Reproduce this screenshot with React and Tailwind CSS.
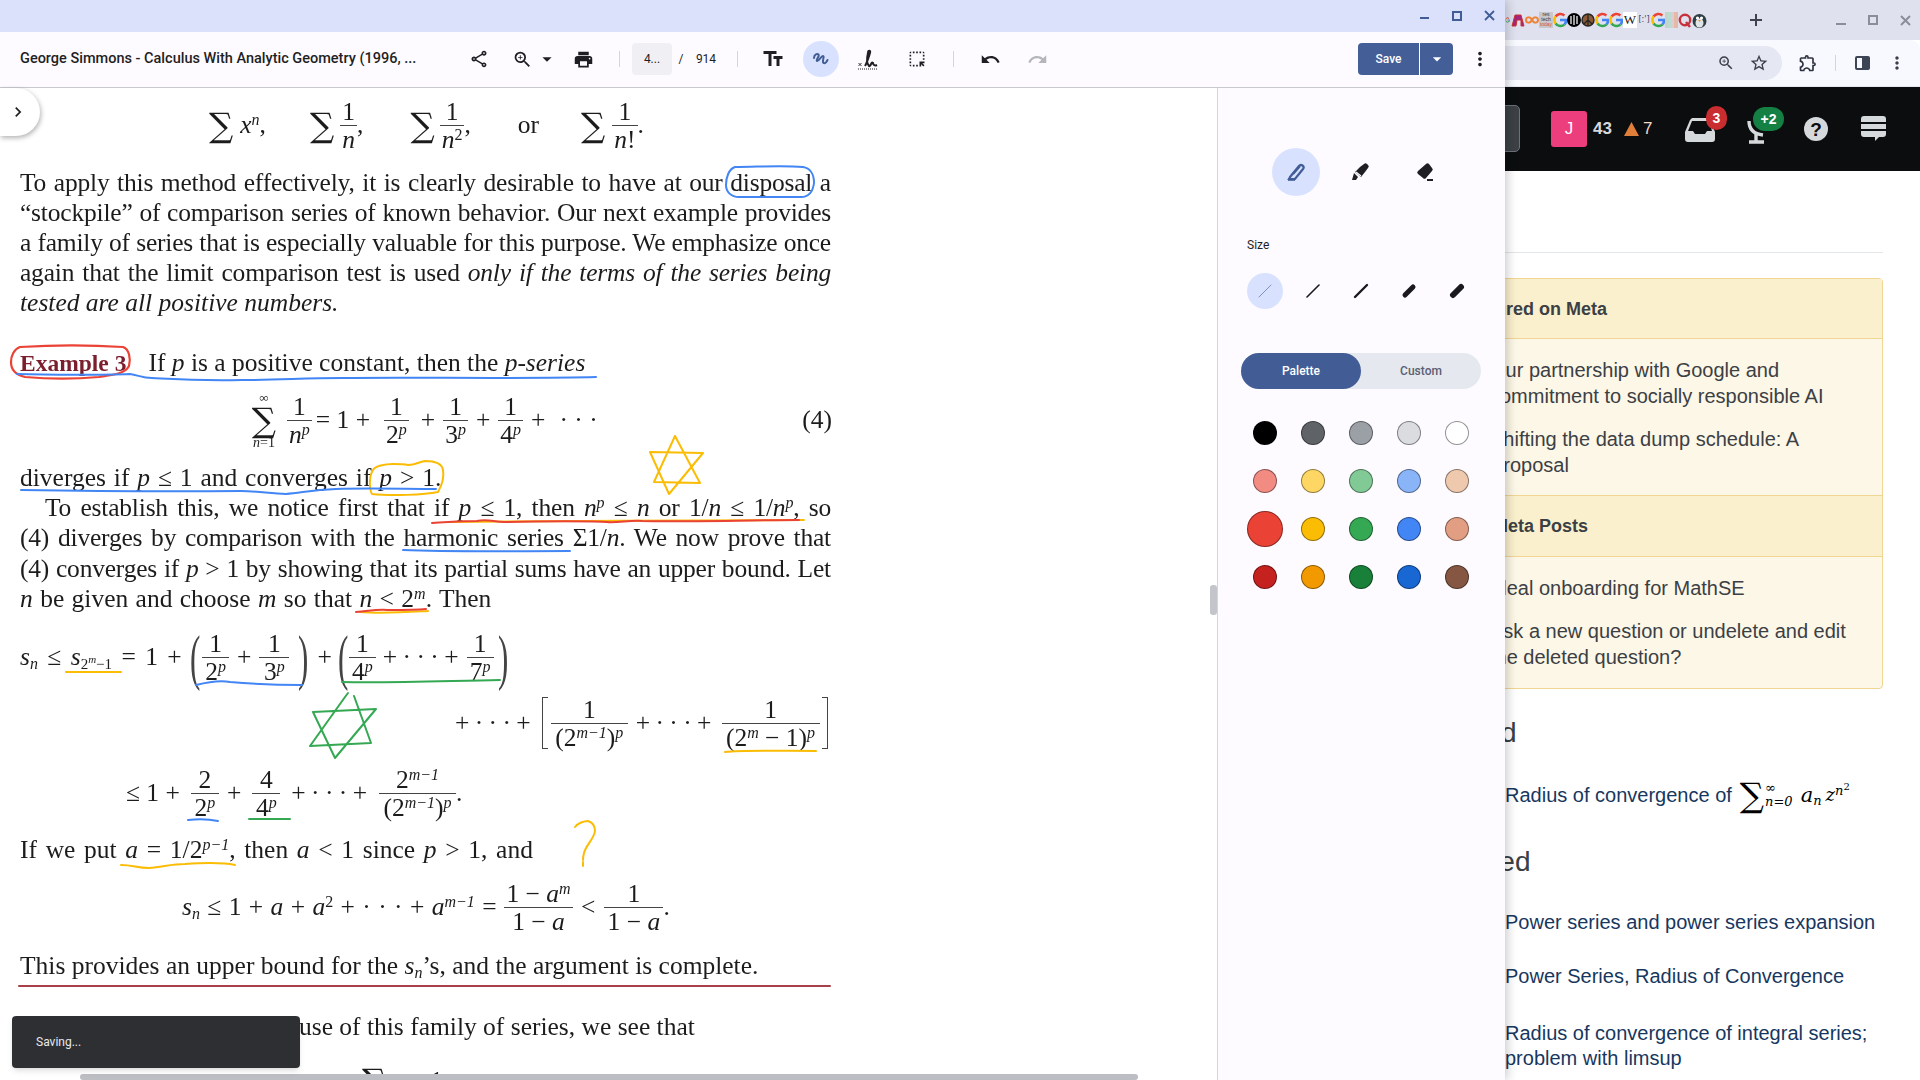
import React from "react";
import { MdOutlineShare, MdZoomIn, MdPrint, MdTextFields, MdUndo, MdRedo, MdMoreVert, MdHighlightAlt, MdArrowDropDown, MdChevronRight, MdStarBorder, MdOutlineExtension } from "react-icons/md";

const F = ({ n, d, cls = "" }) => (
  <span className={"inline-flex flex-col items-center leading-[27px] shrink-0 " + cls}>
    <span className="px-[2px]">{n}</span>
    <span className="h-px w-full bg-[#444]" />
    <span className="px-[2px]">{d}</span>
  </span>
);
const I = ({ children }) => <i className="italic">{children}</i>;
const Sigma = ({ cls = "" }) => <span className={"text-[34px] leading-[36px] font-['DejaVu_Serif',serif] font-light " + cls}>∑</span>;
const P = () => <sup className="italic text-[16px]">p</sup>;
const J = ({ children }) => <div className="h-[30px] leading-[30px] text-justify [text-align-last:justify] whitespace-nowrap tracking-[-0.2px]">{children}</div>;
const J2 = ({ children }) => <div className="h-[30.3px] leading-[30px] text-justify [text-align-last:justify] whitespace-nowrap tracking-[-0.2px]">{children}</div>;

function G() {
  return (
    <svg width="14" height="16" viewBox="0 0 14 16" fill="none" strokeWidth="2.6">
      <path d="M11.4 3.4A6 6 0 0 0 2.6 4.6" stroke="#ea4335" />
      <path d="M2.6 4.6a6 6 0 0 0 0 6.8" stroke="#fbbc04" />
      <path d="M2.6 11.4a6 6 0 0 0 9 1" stroke="#34a853" />
      <path d="M11.6 12.4A6 6 0 0 0 13 8H7" stroke="#4285f4" />
    </svg>
  );
}

function Favicons() {
  return (
    <div className="flex items-center h-4 w-[205px] overflow-hidden">
      <div className="w-[5px] overflow-hidden flex justify-end shrink-0"><G /></div>
      <svg className="ml-[1px] shrink-0" width="14" height="16" viewBox="0 0 14 16" fill="none"><path d="M1 14 4 3h6l3 11h-3V8H6L5 14z" fill="#a4247e" stroke="#c8352f" /></svg>
      <svg className="shrink-0" width="14" height="16" viewBox="0 0 14 16" fill="none" stroke="#ef8336" strokeWidth="2"><path d="M7 8C5 4 1 5 1 8s4 4 6 0 6-3 6 0-4 4-6 0" /></svg>
      <div className="shrink-0 w-[14px] h-4 bg-[#c8c8cc] text-[5px] leading-[5px] font-['Liberation_Sans',sans-serif] text-[#333] text-center overflow-hidden">res<br />tech<br /><span className="text-[#d7542a]">today</span></div>
      <G />
      <svg className="shrink-0" width="14" height="16" viewBox="0 0 14 16"><circle cx="7" cy="8" r="7" fill="#000" /><path d="M4 4v8M7 3v10M10 4v8" stroke="#ddd" strokeWidth="1.4" /></svg>
      <svg className="shrink-0" width="14" height="16" viewBox="0 0 14 16" fill="none"><circle cx="7" cy="8" r="6" fill="#8a5a36" stroke="#222" strokeWidth="1.4" /><path d="M7 2v12M7 8l-4 4M7 8l4 4" stroke="#222" strokeWidth="1.2" /></svg>
      <G />
      <G />
      <div className="shrink-0 w-[14px] h-4 bg-white text-[13px] leading-4 font-['Liberation_Serif',serif] text-[#222] text-center">W</div>
      <div className="shrink-0 w-[14px] h-4 text-[8px] leading-4 font-['DejaVu_Sans',sans-serif] text-[#445] text-center">{"[:']"}</div>
      <G />
      <div className="shrink-0 w-[13px] h-4 flex">
        <span className="w-[3px] bg-[#c6d3c6]" /><span className="w-[3px] bg-[#b9dcd0]" /><span className="w-[3px] bg-[#e3c9d0]" /><span className="w-[4px] bg-[#e3b9a8]" />
      </div>
      <svg className="shrink-0" width="14" height="16" viewBox="0 0 14 16" fill="none"><circle cx="7" cy="8" r="5.2" stroke="#c8323c" strokeWidth="2.4" /><path d="m8 10 4 5" stroke="#c8323c" strokeWidth="2.4" /></svg>
      <svg className="shrink-0" width="15" height="16" viewBox="0 0 15 16"><ellipse cx="7.5" cy="9" rx="7" ry="7" fill="#2f3d44" /><ellipse cx="7.5" cy="11" rx="4" ry="4.5" fill="#dfe4e6" /><circle cx="5.5" cy="6" r="1.6" fill="#fff" /><circle cx="9.5" cy="6" r="1.6" fill="#fff" /><path d="M6 8h3l-1.5 2z" fill="#e5953a" /></svg>
    </div>
  );
}

function Background() {
  return (
    <div className="w-[1920px] h-[1080px] bg-white flex flex-col font-['Liberation_Sans',Arial,sans-serif]">
      <div className="h-10 bg-[#dfe1ef] flex items-center pl-[1505px] shrink-0">
        <Favicons />
        <svg className="ml-[39px] shrink-0" width="14" height="14" viewBox="0 0 14 14" stroke="#3f4350" strokeWidth="2"><path d="M7 1v12M1 7h12" /></svg>
        <span className="ml-[73px] w-[10px] h-[2px] bg-[#8b8d99] mt-[8px] shrink-0" />
        <span className="ml-[22px] w-[10px] h-[10px] border-2 border-[#8b8d99] shrink-0" />
        <svg className="ml-[22px] shrink-0" width="11" height="11" viewBox="0 0 11 11" stroke="#8b8d99" strokeWidth="2"><path d="m1 1 9 9M10 1l-9 9" /></svg>
      </div>
      <div className="h-[47px] bg-[#f8f9ff] rounded-t-[10px] flex items-center shrink-0 border-b border-[#e6e8f0]">
        <div className="ml-[1200px] w-[582px] h-[34px] rounded-r-[17px] bg-[#e5e7f3] flex items-center justify-end pr-[13px] text-[#3c3f4a]">
          <MdZoomIn size={18} />
          <MdStarBorder size={20} className="ml-[14px]" />
        </div>
        <MdOutlineExtension size={20} className="ml-[16px] text-[#2f3340] shrink-0" />
        <span className="ml-[17px] w-[1px] h-[16px] bg-[#cdd6ee]" />
        <span className="ml-[19px] w-[15px] h-[14px] border-2 border-[#3d4454] rounded-[2px] flex justify-end"><span className="w-[6px] bg-[#3d4454]" /></span>
        <MdMoreVert size={20} className="ml-[17px] text-[#3c3f4a] shrink-0" />
      </div>
      <div className="h-[84px] bg-[#0c0d0e] flex items-center pl-[1400px] shrink-0 text-[#d6d9dc]">
        <div className="w-[120px] h-[47px] bg-[#3c4146] border border-[#6a737c] rounded-[5px] mt-[-1px]" />
        <div className="ml-[31px] w-9 h-9 rounded-[3px] bg-[#ec3d7c] text-white text-[17px] flex items-center justify-center">J</div>
        <span className="ml-[6px] text-[17px] font-bold w-[26px]">43</span>
        <svg className="ml-[5px]" width="15" height="14" viewBox="0 0 15 14"><path d="M7.5 0 15 14H0z" fill="#e07f3a" /></svg>
        <span className="ml-[4px] text-[17px] text-[#f0d9c6] w-[10px]">7</span>
        <div className="relative ml-[32px] w-[32px] h-[26px]">
          <svg width="30" height="24" viewBox="0 0 30 24" className="mt-[2px]"><path d="M7 0h17l6 14v7a3 3 0 0 1-3 3H3a3 3 0 0 1-3-3v-7L5 2zM7 3l-4 10h5l2 3h10l2-3h5L24 3z" fill="#d6d9dc" fillRule="evenodd" /></svg>
          <span className="absolute left-[21px] top-[-10px] w-[21px] h-[24px] rounded-full bg-[#c92d30] text-white text-[14px] font-bold flex items-center justify-center">3</span>
        </div>
        <div className="relative ml-[28px] w-[40px] h-[30px]">
          <svg width="24" height="26" viewBox="0 0 24 26" className="mt-[4px]" fill="none" stroke="#d6d9dc" strokeWidth="3.4"><path d="M4 3c0 8 5 13 14 14M11 16v7M4 24h15" /></svg>
          <span className="absolute left-[8px] top-[-7px] w-[31px] h-[24px] rounded-full bg-[#158043] text-white text-[14px] font-bold flex items-center justify-center">+2</span>
        </div>
        <div className="ml-[19px] w-6 h-6 rounded-full bg-[#d6d9dc] text-[#0c0d0e] text-[19px] font-bold flex items-center justify-center leading-none">?</div>
        <svg className="ml-[33px]" width="25" height="26" viewBox="0 0 25 26" fill="#d6d9dc"><path d="M3 0h19a3 3 0 0 1 3 3v3H0V3a3 3 0 0 1 3-3zM0 8h25v5H0zM0 15h25v3a3 3 0 0 1-3 3h-4l-4 4v-4H3a3 3 0 0 1-3-3z" /></svg>
      </div>
      <div className="pl-[1440px] pr-[37px] flex-1 min-h-0">
        <div className="h-px bg-[#e3e6e8] mt-[81px]" />
        <div className="mt-[25px] h-[411px] border border-[#f1d592] rounded-[4px] bg-[#fdf7e7] text-[#3b4045] text-[20px] leading-[26px] whitespace-nowrap">
          <div className="h-[60px] bg-[#fbf0cd] border-b border-[#f1d592] flex items-center pl-[17px] font-bold text-[18px]">Featured on Meta</div>
          <div className="pl-[49px] pt-[18px] h-[156px]">
            <div>Our partnership with Google and<br />commitment to socially responsible AI</div>
            <div className="mt-[17px]">Shifting the data dump schedule: A<br />Proposal</div>
          </div>
          <div className="h-[62px] bg-[#fbf0cd] border-y border-[#f1d592] flex items-center pl-[17px] font-bold text-[18px]">Hot Meta Posts</div>
          <div className="pl-[49px] pt-[18px]">
            <div>Ideal onboarding for MathSE</div>
            <div className="mt-[17px]">Ask a new question or undelete and edit<br />the deleted question?</div>
          </div>
        </div>
        <div className="ml-[-6px] mt-[25px] text-[#3b4045] text-[28px] leading-[38px]">Linked</div>
        <div className="pl-[65px] mt-[30px] h-[26px] text-[#17375e] text-[20px] leading-[26px] whitespace-nowrap flex items-center">
          Radius of convergence of
          <span className="ml-[8px] flex items-center text-black font-['DejaVu_Serif',serif]">
            <span className="text-[34px] leading-[30px]">∑</span>
            <span className="flex flex-col text-[13px] leading-[14px] ml-[1px] items-start italic"><span>∞</span><span>n=0</span></span>
            <span className="ml-[8px] italic text-[21px]">a<sub className="text-[13px]">n</sub></span>
            <span className="ml-[4px] italic text-[18px]">z<sup className="text-[13px]">n<sup className="text-[10px] not-italic">2</sup></sup></span>
          </span>
        </div>
        <div className="ml-[-6px] mt-[35px] text-[#3b4045] text-[28px] leading-[38px]">Related</div>
        <div className="pl-[65px] mt-[29px] text-[#17375e] text-[20px] leading-[25px] whitespace-nowrap">
          <div>Power series and power series expansion</div>
          <div className="mt-[29px]">Power Series, Radius of Convergence</div>
          <div className="mt-[32px]">Radius of convergence of integral series;<br />problem with limsup</div>
        </div>
      </div>
    </div>
  );
}

const BR = ({ c, cls = "" }) => <span className={"text-[62px] leading-[62px] font-light text-[#444] scale-x-50 w-[12px] text-center " + cls}>{c}</span>;
const Dots = ({ cls = "" }) => <span className={"[word-spacing:-1px] " + cls}>+ · · · +</span>;

function Doc() {
  return (
    <div className="w-full h-full bg-white font-['Liberation_Serif','Times_New_Roman',serif] text-[25.5px] text-[#1c1c1c] blur-[0.35px] overflow-hidden">
      <div className="h-[74px] flex items-center whitespace-nowrap">
        <Sigma cls="ml-[209px]" />
        <span className="ml-[7px]"><I>x<sup className="text-[16px]">n</sup></I>,</span>
        <Sigma cls="ml-[44px]" />
        <F n="1" d={<I>n</I>} cls="ml-[6px]" /><span className="self-center">,</span>
        <Sigma cls="ml-[47px]" />
        <F n="1" d={<><I>n</I><sup className="text-[16px]">2</sup></>} cls="ml-[5px]" /><span>,</span>
        <span className="ml-[47px]">or</span>
        <Sigma cls="ml-[42px]" />
        <F n="1" d={<><I>n</I>!</>} cls="ml-[7px]" /><span>.</span>
      </div>
      <div className="mt-[6px] px-5 w-[851px]">
        <J>To apply this method effectively, it is clearly desirable to have at our disposal a</J>
        <J>“stockpile” of comparison series of known behavior. Our next example provides</J>
        <J>a family of series that is especially valuable for this purpose. We emphasize once</J>
        <J>again that the limit comparison test is used <I>only if the terms of the series being</I></J>
        <div className="h-[30px] leading-[30px]"><I>tested are all positive numbers.</I></div>
      </div>
      <div className="mt-[30px] h-[30px] leading-[30px] pl-[20px] whitespace-nowrap">
        <span className="font-bold text-[#7b1f2e] text-[23.5px]">Example 3</span>
        <span className="ml-[22px]">If <I>p</I> is a positive constant, then the <I>p-series</I></span>
      </div>
      <div className="mt-[7px] h-[70px] flex items-center whitespace-nowrap w-[851px]">
        <span className="ml-[250px] w-[28px] flex flex-col items-center leading-none shrink-0">
          <span className="text-[13px] leading-[12px]">∞</span>
          <span className="h-[32px] flex items-center"><Sigma /></span>
          <span className="text-[14px] leading-[13px]"><I>n</I>=1</span>
        </span>
        <F n="1" d={<><I>n</I><P /></>} cls="ml-[9px]" />
        <span className="ml-[4px]">= 1 +</span>
        <F n="1" d={<>2<P /></>} cls="ml-[14px]" />
        <span className="ml-[12px]">+</span>
        <F n="1" d={<>3<P /></>} cls="ml-[8px]" />
        <span className="ml-[8px]">+</span>
        <F n="1" d={<>4<P /></>} cls="ml-[8px]" />
        <span className="ml-[8px]">+</span>
        <span className="ml-[14px]">· · ·</span>
        <span className="ml-auto mr-[19px]">(4)</span>
      </div>
      <div className="mt-[8px] h-[30px] leading-[30px] pl-[20px] whitespace-nowrap [word-spacing:1.5px]">diverges if <I>p</I> ≤ 1 and converges if <I>p</I> &gt; 1.</div>
      <div className="px-5 w-[851px]">
        <div className="pl-[25px]"><J2>To establish this, we notice first that if <I>p</I> ≤ 1, then <I>n<sup className="text-[16px]">p</sup></I> ≤ <I>n</I> or 1/<I>n</I> ≤ 1/<I>n<sup className="text-[16px]">p</sup></I>, so</J2></div>
        <J2>(4) diverges by comparison with the harmonic series Σ1/<I>n</I>. We now prove that</J2>
        <J2>(4) converges if <I>p</I> &gt; 1 by showing that its partial sums have an upper bound. Let</J2>
        <div className="h-[30.3px] leading-[30px] whitespace-nowrap [word-spacing:1px]"><I>n</I> be given and choose <I>m</I> so that <I>n</I> &lt; 2<sup className="italic text-[16px]">m</sup>. Then</div>
      </div>
      <div className="mt-[6px] h-[74px] flex items-center whitespace-nowrap pl-[20px]">
        <span className="w-[161px] shrink-0 [word-spacing:3px]"><I>s<sub className="text-[16px]">n</sub></I> ≤ <I>s</I><sub className="text-[15px]">2<sup className="italic text-[11px]">m</sup>−1</sub> = 1 +</span>
        <BR c="(" cls="ml-[6px]" />
        <F n="1" d={<>2<P /></>} cls="ml-[3px] w-[27px]" />
        <span className="ml-[8px]">+</span>
        <F n="1" d={<>3<P /></>} cls="ml-[8px] w-[30px]" />
        <BR c=")" cls="ml-[6px]" />
        <span className="ml-[10px]">+</span>
        <BR c="(" cls="ml-[3px]" />
        <F n="1" d={<>4<P /></>} cls="ml-[2px] w-[27px]" />
        <Dots cls="ml-[7px]" />
        <F n="1" d={<>7<P /></>} cls="ml-[8px] w-[27px]" />
        <BR c=")" cls="ml-[1px]" />
      </div>
      <div className="h-[58px] flex items-center whitespace-nowrap pl-[455px]">
        <Dots />
        <span className="ml-[11px] w-[6px] h-[52px] border border-r-0 border-[#444] shrink-0" />
        <F n="1" d={<>(2<sup className="italic text-[16px]">m−1</sup>)<P /></>} cls="ml-[3px] w-[77px]" />
        <Dots cls="ml-[8px]" />
        <F n="1" d={<>(2<sup className="italic text-[16px]">m</sup> − 1)<P /></>} cls="ml-[10px] w-[98px]" />
        <span className="ml-[2px] w-[6px] h-[52px] border border-l-0 border-[#444] shrink-0" />
      </div>
      <div className="h-[82px] flex items-center whitespace-nowrap pl-[126px]">
        <span>≤ 1 +</span>
        <F n="2" d={<>2<P /></>} cls="ml-[11px] w-[28px]" />
        <span className="ml-[8px]">+</span>
        <F n="4" d={<>4<P /></>} cls="ml-[11px] w-[28px]" />
        <Dots cls="ml-[11px]" />
        <F n={<>2<sup className="italic text-[16px]">m−1</sup></>} d={<>(2<sup className="italic text-[16px]">m−1</sup>)<P /></>} cls="ml-[12px] w-[77px]" />
        <span>.</span>
      </div>
      <div className="mt-[1px] h-[30px] leading-[30px] pl-[20px] whitespace-nowrap [word-spacing:2.3px]">If we put <I>a</I> = 1/2<sup className="italic text-[16px]">p−1</sup>, then <I>a</I> &lt; 1 since <I>p</I> &gt; 1, and</div>
      <div className="mt-[5px] h-[74px] flex items-center whitespace-nowrap pl-[182px]">
        <span className="w-[313px] shrink-0 [word-spacing:1px]"><I>s<sub className="text-[16px]">n</sub></I> ≤ 1 + <I>a</I> + <I>a</I><sup className="text-[16px]">2</sup> + · · · + <I>a</I><sup className="italic text-[16px]">m−1</sup> =</span>
        <F n={<>1 − <I>a</I><sup className="italic text-[16px]">m</sup></>} d={<>1 − <I>a</I></>} cls="ml-[9px] w-[69px]" />
        <span className="ml-[8px]">&lt;</span>
        <F n="1" d={<>1 − <I>a</I></>} cls="ml-[9px] w-[59px]" />
        <span>.</span>
      </div>
      <div className="mt-[7px] h-[30px] leading-[30px] pl-[20px] whitespace-nowrap">This provides an upper bound for the <I>s<sub className="text-[16px]">n</sub></I>’s, and the argument is complete.</div>
      <div className="mt-[31px] h-[30px] leading-[30px] pl-[248px] whitespace-nowrap">Because of this family of series, we see that</div>
      <div className="mt-[20px] flex items-center whitespace-nowrap pl-[362px]">
        <Sigma />
        <span className="ml-[44px]">1</span>
      </div>
    </div>
  );
}

function Ink() {
  const s = { fill: "none", strokeLinecap: "round", strokeLinejoin: "round" };
  return (
    <svg className="absolute left-0 top-0 pointer-events-none" width="1217" height="1080" viewBox="0 0 1217 1080" {...s} strokeWidth="2">
      <path stroke="#4285f4" d="M735 167c-6 2-9 10-9 18 0 7 5 12 13 12h62c8 0 12-6 13-14 0-9-4-15-11-16-22-2-46 0-68 0z" />
      <path stroke="#ea4335" strokeWidth="2.2" d="M20 347c-6 2-9 9-9 15 0 8 5 13 14 15 24 2 50 2 74 0 13-2 26-3 30-11 2-8 0-17-6-19-30-2-72-2-103 0z" />
      <path stroke="#4285f4" d="M17 374c30 1 90 1 113 0 8 1 12 4 22 4 20 1 45 3 90 2 40 0 60-2 100-2 60-1 190 1 254-1" />
      <path stroke="#fbbc04" d="M675 436l25 47-46-1 21-46M650 452l53 1-34 41-19-42z" />
      <path stroke="#fbbc04" d="M373 470c-4 6-4 19-1 24 18 2 52 1 66-2 4-7 6-16 5-22-1-6-8-9-18-9-7 1-9 4-17 4-4-1-9-1-15-1-8 0-18 2-20 6z" />
      <path stroke="#4285f4" d="M21 490c60 1 120 2 220 1 18 0 30 3 45 3 15-1 25-4 50-5 30-1 70 0 100 0" />
      <path stroke="#fbbc04" d="M449 522c100-1 260-2 355-2" />
      <path stroke="#ea4335" d="M432 523c20-1 30-2 45-2 12-3 18 2 30 1 30-1 90-1 100 0 10 1 24-2 35-1 40 1 110-1 157-1" />
      <path stroke="#4285f4" d="M403 550c50 2 110 1 167 1" />
      <path stroke="#fbbc04" d="M360 612c22 2 50 0 68-1" />
      <path stroke="#ea4335" d="M356 612c14-1 20-3 32-2 14 0 28 0 38-1" />
      <path stroke="#fbbc04" d="M66 672h55" />
      <path stroke="#4285f4" d="M196 685c12-3 24-5 34-3 24 2 46 3 72 3" />
      <path stroke="#34a853" d="M342 682c50 1 100-1 158-2" />
      <path stroke="#34a853" d="M345 697l-35 49 61-3-17-47M345 697l3-4M313 712l63-3-41 49-22-46z" />
      <path stroke="#fbbc04" d="M725 752c20-2 55-1 91-1" />
      <path stroke="#4285f4" d="M188 820c10-1 20-1 30 1" />
      <path stroke="#34a853" d="M249 819h41" />
      <path stroke="#fbbc04" d="M575 827c3-4 9-6 13-6 5 1 7 6 7 10-1 8-9 14-11 22-1 4-1 5-1 7M583 862v4" />
      <path stroke="#fbbc04" d="M121 865c12 0 16 3 28 3 14-1 22-4 36-4 16-1 36-2 50 1" />
      <path stroke="#a8404a" d="M19 986h811" />
    </svg>
  );
}

const Pen = () => (
  <svg width="20" height="20" viewBox="0 0 20 20" fill="none" stroke="#425d96" strokeWidth="2.2"><path d="M4 15 13 4a2.4 2.4 0 0 1 4 3l-8 10H3z" /><path d="M2 18h7" strokeWidth="1.6" /><path d="m7 12 7-8" /></svg>
);
const Marker = () => (
  <svg width="20" height="20" viewBox="0 0 20 20" fill="#1f1f23"><path d="M10 5 14 2a2 2 0 0 1 3 0l1 1a2 2 0 0 1 0 3l-3 4-4 5-6-5zM4 11l4 4-2 3H2z" /><path d="m6 10 5 4" stroke="#fdfbff" strokeWidth="1.2" /></svg>
);
const Eraser = () => (
  <svg width="20" height="20" viewBox="0 0 20 20" fill="#1f1f23"><path d="M12 2a2 2 0 0 1 3 0l3 4a2 2 0 0 1 0 3l-6 7a2 2 0 0 1-3 0l-5-4a2 2 0 0 1 0-3z" /><path d="M13 17h6v2h-6z" /></svg>
);

const COLORS = [
  ["#000000", "#5f6368", "#9aa0a6", "#dadce0", "#ffffff"],
  ["#f28b82", "#fdd663", "#81c995", "#8ab4f8", "#eec9ae"],
  ["#ea4335", "#fbbc04", "#34a853", "#4285f4", "#e29e82"],
  ["#c5221f", "#f29900", "#188038", "#1967d2", "#855743"],
];
const SIZES = [
  { w: 1, d: "M2 14 14 2" },
  { w: 1.6, d: "M2 14 14 2" },
  { w: 2.4, d: "M2 14 14 2" },
  { w: 5, d: "M4 12 12 4" },
  { w: 6, d: "M4 12 12 4" },
];

function Side() {
  return (
    <div className="w-[288px] shrink-0 border-l border-[#d5d6da] bg-[#fdfbff] font-['Roboto',sans-serif] flex flex-col">
      <div className="mt-[60px] ml-[46px] flex">
        <div className="w-16 h-12 flex justify-center"><span className="w-12 h-12 rounded-full bg-[#d8e2ff] flex items-center justify-center"><Pen /></span></div>
        <div className="w-16 h-12 flex items-center justify-center"><Marker /></div>
        <div className="w-16 h-12 flex items-center justify-center"><Eraser /></div>
      </div>
      <div className="mt-[41px] ml-[29px] text-[12px] leading-4 text-[#1f1f23]">Size</div>
      <div className="mt-[20px] ml-[23px] w-[240px] grid grid-cols-5">
        {SIZES.map((z, i) => (
          <div key={i} className="h-9 flex items-center justify-center">
            <span className={i === 0 ? "w-9 h-9 rounded-full bg-[#d8e2ff] flex items-center justify-center" : "w-9 h-9 flex items-center justify-center"}>
              <svg width="16" height="16" viewBox="0 0 16 16"><path d={z.d} stroke={i === 0 ? "#7d90c0" : "#1a1a1e"} strokeWidth={z.w} strokeLinecap="round" /></svg>
            </span>
          </div>
        ))}
      </div>
      <div className="mt-[44px] ml-[23px] w-[240px] h-9 rounded-full bg-[#e6e8f0] flex text-[12px] font-medium">
        <div className="w-[120px] rounded-full bg-[#425d96] text-white flex items-center justify-center">Palette</div>
        <div className="flex-1 text-[#5a5e72] flex items-center justify-center">Custom</div>
      </div>
      <div className="mt-[20px] ml-[23px] w-[240px] grid grid-cols-5">
        {COLORS.flat().map((c, i) => (
          <div key={i} className="h-12 flex items-center justify-center">
            <span
              className={(c === "#ea4335" ? "w-9 h-9" : "w-6 h-6") + " rounded-full border border-[rgba(0,0,0,0.42)]"}
              style={{ backgroundColor: c }}
            />
          </div>
        ))}
      </div>
    </div>
  );
}

function Toolbar() {
  const slot = "w-10 h-10 flex items-center justify-center shrink-0 text-[#1f1f23]";
  return (
    <div className="h-[56px] shrink-0 flex items-center bg-[#fdfbff] border-b border-[#c9cacd] font-['Roboto',sans-serif] text-[#1f1f23] pb-[1px]">
      <div className="ml-5 w-[398px] text-[14.5px] font-medium whitespace-nowrap overflow-hidden">George Simmons - Calculus With Analytic Geometry (1996, ...</div>
      <div className={"ml-[41px] " + slot}><MdOutlineShare size={20} /></div>
      <div className={"ml-[3px] " + slot}><MdZoomIn size={21} /></div>
      <div className="w-[10px] flex justify-center shrink-0"><MdArrowDropDown size={22} className="shrink-0" /></div>
      <div className={"ml-[11px] " + slot}><MdPrint size={21} /></div>
      <span className="ml-[16px] w-px h-[16px] bg-[#d5d6da]" />
      <div className="ml-[12px] w-10 h-8 rounded-[4px] bg-[#f0f0f4] text-[12px] flex items-center justify-center">4...</div>
      <div className="w-[18px] text-[12px] text-center">/</div>
      <div className="w-8 text-[12px] text-center">914</div>
      <span className="ml-[15px] w-px h-[16px] bg-[#d5d6da]" />
      <div className={"ml-[15px] " + slot}><MdTextFields size={24} /></div>
      <div className="ml-[10px] w-9 h-9 rounded-full bg-[#d8e2ff] flex items-center justify-center shrink-0">
        <svg width="18" height="18" viewBox="0 0 18 18" fill="none" stroke="#425d96" strokeWidth="2" strokeLinecap="round"><path d="M2 8c0-3 3-5 4.500-3.500 1.500 2-3 5-1.500 6.500 1.500 1 4-5 6-5 2 .5-1.500 5 .5 7 1.500 1 3-1 4-3" /></svg>
      </div>
      <div className={"ml-[9px] " + slot}>
        <svg width="22" height="22" viewBox="0 0 22 22" fill="none" stroke="#1f1f23"><path d="M1.500 15l3 3M4.500 15l-3 3" strokeWidth="0.9" /><path d="M8 18c2-3 4-10 5-13 1-3-2-3-2 0-1 4-2 10 1 13 2 1 2-5 4-3 0 2 2 3 4 2" strokeWidth="2" /><path d="M1 21h20" strokeWidth="1" strokeDasharray="1 1" /></svg>
      </div>
      <div className={"ml-[9px] " + slot}><MdHighlightAlt size={20} /></div>
      <span className="ml-[16px] w-px h-[16px] bg-[#d5d6da]" />
      <div className={"ml-[16px] " + slot}><MdUndo size={21} /></div>
      <div className={"ml-[7px] " + slot + " !text-[#b5b6b9]"}><MdRedo size={21} /></div>
      <div className="ml-auto h-8 w-[95px] flex rounded-[4px] bg-[#445e97] text-white text-[12px] font-medium overflow-hidden shrink-0">
        <div className="w-[62px] flex items-center justify-center border-r border-white">Save</div>
        <div className="flex-1 flex items-center justify-center"><MdArrowDropDown size={20} /></div>
      </div>
      <div className={"ml-[7px] mr-[5px] " + slot}><MdMoreVert size={22} /></div>
    </div>
  );
}

function Window() {
  return (
    <div className="absolute left-0 top-0 w-[1505px] h-[1080px] flex flex-col overflow-hidden bg-white shadow-[2px_0_10px_rgba(0,0,0,0.22)]">
      <div className="h-[32px] shrink-0 bg-[#dbe1fa] flex items-center justify-end text-[#425d96]">
        <span className="w-[9px] h-[2px] bg-[#425d96] mt-[4px]" />
        <span className="ml-[23px] w-[10px] h-[10px] border-2 border-[#425d96] mt-[-1px]" />
        <svg className="ml-[22px] mr-[10px] mt-[-1px]" width="11" height="11" viewBox="0 0 11 11" stroke="#425d96" strokeWidth="1.8"><path d="m1 1 9 9M10 1l-9 9" /></svg>
      </div>
      <Toolbar />
      <div className="flex-1 flex min-h-0 relative">
        <div className="w-[1217px] shrink-0 relative overflow-hidden">
          <Doc />
        </div>
        <Side />
      </div>
      <Ink />
      <div className="absolute left-0 top-[88px] w-10 h-12 bg-white rounded-r-[24px] shadow-[1px_2px_5px_rgba(0,0,0,0.3)] flex items-center pl-[8px] text-[#1f1f23]">
        <MdChevronRight size={20} />
      </div>
      <div className="absolute left-[1210px] top-[585px] w-[7px] h-[30px] rounded-[3px] bg-[#c4c5ca]" />
      <div className="absolute left-[80px] top-[1074px] w-[1058px] h-[6px] rounded-full bg-[#bcbec3]" />
      <div className="absolute left-[12px] top-[1016px] w-[288px] h-[52px] rounded-[4px] bg-[#2e2f33] shadow-md flex items-center pl-[24px] text-[12px] text-[#e8eaed] font-['Roboto',sans-serif]">Saving...</div>
    </div>
  );
}

export default function App() {
  return (
    <div className="relative w-[1920px] h-[1080px] overflow-hidden">
      <Background />
      <Window />
    </div>
  );
}
